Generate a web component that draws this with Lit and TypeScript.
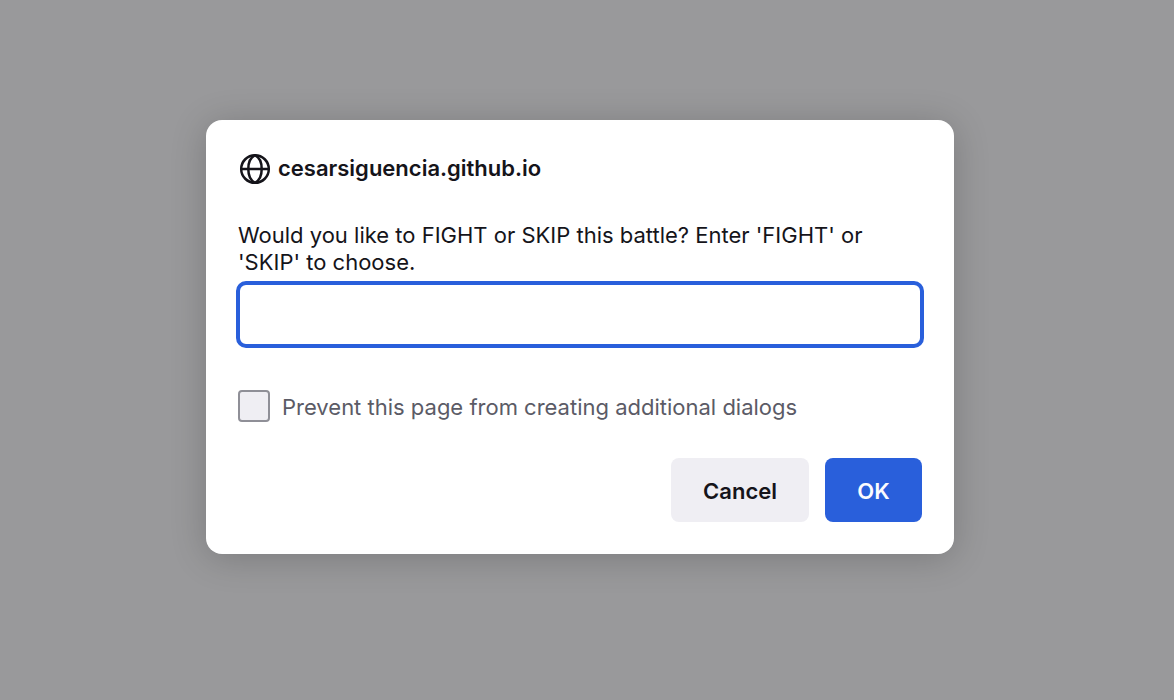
import { LitElement, html, css } from "lit";
import { customElement } from "lit/decorators.js";

@customElement("app-root")
export class AppRoot extends LitElement {
  static styles = css`
    :host {
      display: flex;
      justify-content: center;
      align-items: flex-start;
      box-sizing: border-box;
      min-height: 100vh;
      padding: 120px 220px 120px 206px;
      background: #99999b;
      font-family: Inter, sans-serif;
      font-size: 22px;
      line-height: 27px;
      color: #15141a;
    }
    .dialog {
      flex: 1;
      max-width: 748px;
      box-sizing: border-box;
      padding: 32px;
      background: #fff;
      border-radius: 16px;
      box-shadow: 0 4px 36px rgba(0, 0, 0, 0.2);
    }
    .header {
      display: flex;
      align-items: center;
      gap: 6px;
      height: 34px;
    }
    .globe {
      flex: none;
      width: 34px;
      height: 34px;
    }
    .origin {
      margin: 0;
      padding-bottom: 2px;
      font-size: 22px;
      font-weight: 600;
    }
    .prompt {
      display: block;
      margin-top: 36px;
    }
    .field {
      display: flex;
      margin: 5px -2px 0;
    }
    .answer {
      flex: 1;
      min-width: 0;
      box-sizing: border-box;
      height: 67px;
      padding: 0 16px;
      border: 4px solid #295fdb;
      border-radius: 10px;
      outline: none;
      background: #fff;
      font: inherit;
    }
    .prevent {
      display: flex;
      align-items: center;
      gap: 12px;
      margin-top: 42px;
      color: #5b5b66;
    }
    .prevent-text {
      padding-top: 2px;
    }
    .check {
      appearance: none;
      flex: none;
      box-sizing: border-box;
      width: 32px;
      height: 32px;
      margin: 0;
      border: 2px solid #8f8f97;
      border-radius: 4px;
      background: #efeef3;
    }
    .actions {
      display: flex;
      justify-content: flex-end;
      gap: 16px;
      margin-top: 36px;
    }
    .button {
      min-width: 97px;
      height: 64px;
      padding: 2px 32px 0;
      border: 0;
      border-radius: 8px;
      background: #efeef3;
      color: #15141a;
      font: inherit;
      font-weight: 600;
    }
    .primary {
      background: #295fdb;
      color: #fbfbfe;
    }
  `;

  render() {
    return html`
      <form class="dialog" role="dialog" aria-labelledby="origin">
        <header class="header">
          <svg class="globe" viewBox="0 0 34 34" fill="none" stroke="currentColor" stroke-width="2.5" stroke-linejoin="round" aria-hidden="true">
            <circle cx="17" cy="17" r="13.800" />
            <path d="M3.200 17h27.600M17 3.200C12.500 5.500 10.300 11 10.300 17s2.200 11.500 6.700 13.800c4.500-2.300 6.700-7.800 6.700-13.800S21.500 5.500 17 3.200z" />
          </svg>
          <h1 class="origin" id="origin">cesarsiguencia.github.io</h1>
        </header>
        <label class="prompt" for="answer">Would you like to FIGHT or SKIP this battle? Enter 'FIGHT' or 'SKIP' to choose.</label>
        <div class="field">
          <input class="answer" id="answer" type="text" autocomplete="off" />
        </div>
        <label class="prevent">
          <input class="check" type="checkbox" />
          <span class="prevent-text">Prevent this page from creating additional dialogs</span>
        </label>
        <div class="actions">
          <button class="button" type="button">Cancel</button>
          <button class="button primary" type="button">OK</button>
        </div>
      </form>
    `;
  }
}
